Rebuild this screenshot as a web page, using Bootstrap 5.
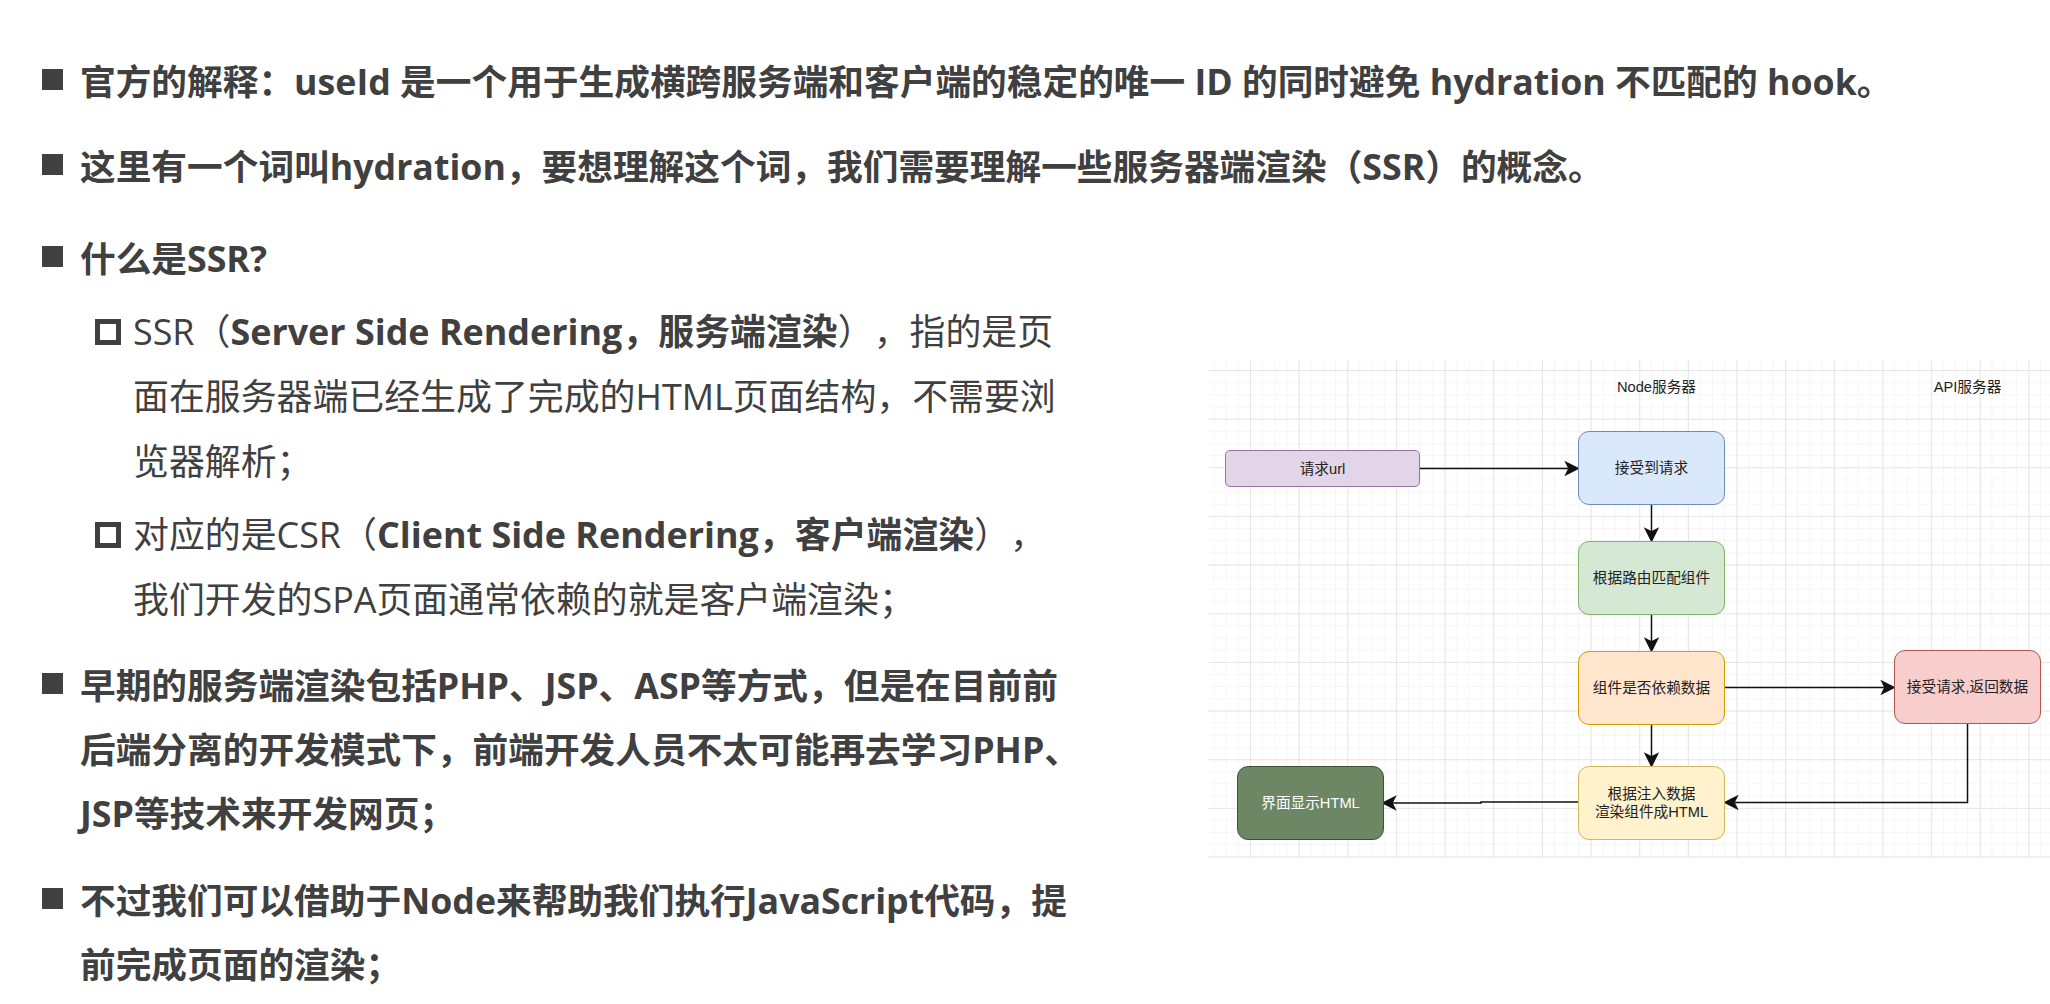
<!doctype html>
<html lang="zh-CN">
<head>
<meta charset="utf-8">
<title>SSR</title>
<link href="https://cdn.jsdelivr.net/npm/bootstrap@5.3.0/dist/css/bootstrap.min.css" rel="stylesheet">
<style>
html,body{height:1004px;overflow:hidden;background:#fff}
.slide{font-family:"Open Sans","Noto Sans CJK SC",sans-serif;font-size:35.7px;color:#404040;height:1004px;padding:49px 0 0 42px;text-spacing-trim:space-all}
.mainitem{font-weight:700;line-height:64px}
.subitem{font-weight:400;font-size:35.9px;line-height:65px;margin-left:53px}
.gap-a{margin-top:21px}
.gap-b{margin-top:28px}
.gap-c{margin-top:9px}
.gap-d{margin-top:8px}
.gap-e{margin-top:21px}
.gap-f{margin-top:23px}
.sq-fill{width:21px;height:21px;background:#404040;flex:none;margin:20px 17px 0 0}
.sq-line{width:26px;height:26px;border:5px solid #404040;flex:none;margin:20px 12px 0 0}
.leftcol{width:1166px;flex:none}
.canvas{position:relative;width:842px;height:498px;margin-top:162px;flex:none;font-family:"Liberation Sans","Noto Sans CJK SC",sans-serif;font-size:14.67px;line-height:18px;color:#222;
 background-color:#fff;
 background-image:linear-gradient(to right,#e6e6e6 1px,transparent 1px),linear-gradient(to bottom,#e6e6e6 1px,transparent 1px),linear-gradient(to right,#f6f6f6 1px,transparent 1px),linear-gradient(to bottom,#f6f6f6 1px,transparent 1px);
 background-size:48.67px 48.67px,48.67px 48.67px,12.17px 12.17px,12.17px 12.17px;
 background-position:42px 10px,42px 10px,5.5px 10px,5.5px 10px}
.wires{position:absolute;left:0;top:0}
.node{position:absolute;width:147px;height:74px;border:1.5px solid;border-radius:11px}
.n-url{left:17px;top:90px;width:195px;height:37px;border-radius:5px;background:#e1d5e7;border-color:#9673a6}
.n-recv{left:370px;top:71px;background:#dae8fc;border-color:#6c8ebf}
.n-route{left:370px;top:181px;background:#d5e8d4;border-color:#82b366}
.n-dep{left:370px;top:291px;background:#ffe6cc;border-color:#d79b00}
.n-inject{left:370px;top:406px;background:#fff2cc;border-color:#d6b656}
.n-api{left:686px;top:290px;background:#f8cecc;border-color:#b85450}
.n-show{left:29px;top:406px;background:#6d8764;border-color:#3a5431;color:#fff}
.tag{position:absolute;top:18px;width:147px;text-align:center}
.tag-node{left:375px}
.tag-api{left:686px}
</style>
</head>
<body class="m-0">
<div class="slide">
  <div class="mainitem d-flex"><span class="sq-fill"></span><div class="text-nowrap">官方的解释：useId 是一个用于生成横跨服务端和客户端的稳定的唯一 ID 的同时避免 hydration 不匹配的 hook。</div></div>
  <div class="mainitem d-flex gap-a"><span class="sq-fill"></span><div class="text-nowrap">这里有一个词叫hydration，要想理解这个词，我们需要理解一些服务器端渲染（SSR）的概念。</div></div>
  <div class="d-flex">
    <div class="leftcol">
      <div class="mainitem d-flex gap-b"><span class="sq-fill"></span><div>什么是SSR?</div></div>
      <div class="subitem d-flex gap-c"><span class="sq-line"></span><div class="text-nowrap">SSR（<b>Server Side Rendering，服务端渲染</b>），指的是页<br>面在服务器端已经生成了完成的HTML页面结构，不需要浏<br>览器解析；</div></div>
      <div class="subitem d-flex gap-d"><span class="sq-line"></span><div class="text-nowrap">对应的是CSR（<b>Client Side Rendering，客户端渲染</b>），<br>我们开发的SPA页面通常依赖的就是客户端渲染；</div></div>
      <div class="mainitem d-flex gap-e"><span class="sq-fill"></span><div class="text-nowrap">早期的服务端渲染包括PHP、JSP、ASP等方式，但是在目前前<br>后端分离的开发模式下，前端开发人员不太可能再去学习PHP、<br>JSP等技术来开发网页；</div></div>
      <div class="mainitem d-flex gap-f"><span class="sq-fill"></span><div class="text-nowrap">不过我们可以借助于Node来帮助我们执行JavaScript代码，提<br>前完成页面的渲染；</div></div>
    </div>
    <div class="canvas">
      <svg class="wires" width="842" height="498" viewBox="1208 360 842 498" fill="none" stroke="#111" stroke-width="1.5">
        <path d="M1420 468.5H1568"/><path d="M1578 468.5l-12-6 3 6-3 6z" fill="#111"/>
        <path d="M1651.5 505V531"/><path d="M1651.5 541l-6-12 6 3 6-3z" fill="#111"/>
        <path d="M1651.5 615V641"/><path d="M1651.5 651l-6-12 6 3 6-3z" fill="#111"/>
        <path d="M1651.5 724V756"/><path d="M1651.5 766l-6-12 6 3 6-3z" fill="#111"/>
        <path d="M1725 687.5H1884"/><path d="M1894 687.5l-12-6 3 6-3 6z" fill="#111"/>
        <path d="M1967.5 724V802.5H1735"/><path d="M1725 802.5l12-6-3 6 3 6z" fill="#111"/>
        <path d="M1578 802H1481V803H1393"/><path d="M1383 803l12-6-3 6 3 6z" fill="#111"/>
      </svg>
      <div class="tag tag-node">Node服务器</div>
      <div class="tag tag-api">API服务器</div>
      <div class="node n-url d-flex align-items-center justify-content-center">请求url</div>
      <div class="node n-recv d-flex align-items-center justify-content-center">接受到请求</div>
      <div class="node n-route d-flex align-items-center justify-content-center">根据路由匹配组件</div>
      <div class="node n-dep d-flex align-items-center justify-content-center">组件是否依赖数据</div>
      <div class="node n-inject d-flex align-items-center justify-content-center text-center">根据注入数据<br>渲染组件成HTML</div>
      <div class="node n-api d-flex align-items-center justify-content-center">接受请求,返回数据</div>
      <div class="node n-show d-flex align-items-center justify-content-center">界面显示HTML</div>
    </div>
  </div>
</div>
<script src="https://cdn.jsdelivr.net/npm/bootstrap@5.3.0/dist/js/bootstrap.bundle.min.js"></script>
</body>
</html>
